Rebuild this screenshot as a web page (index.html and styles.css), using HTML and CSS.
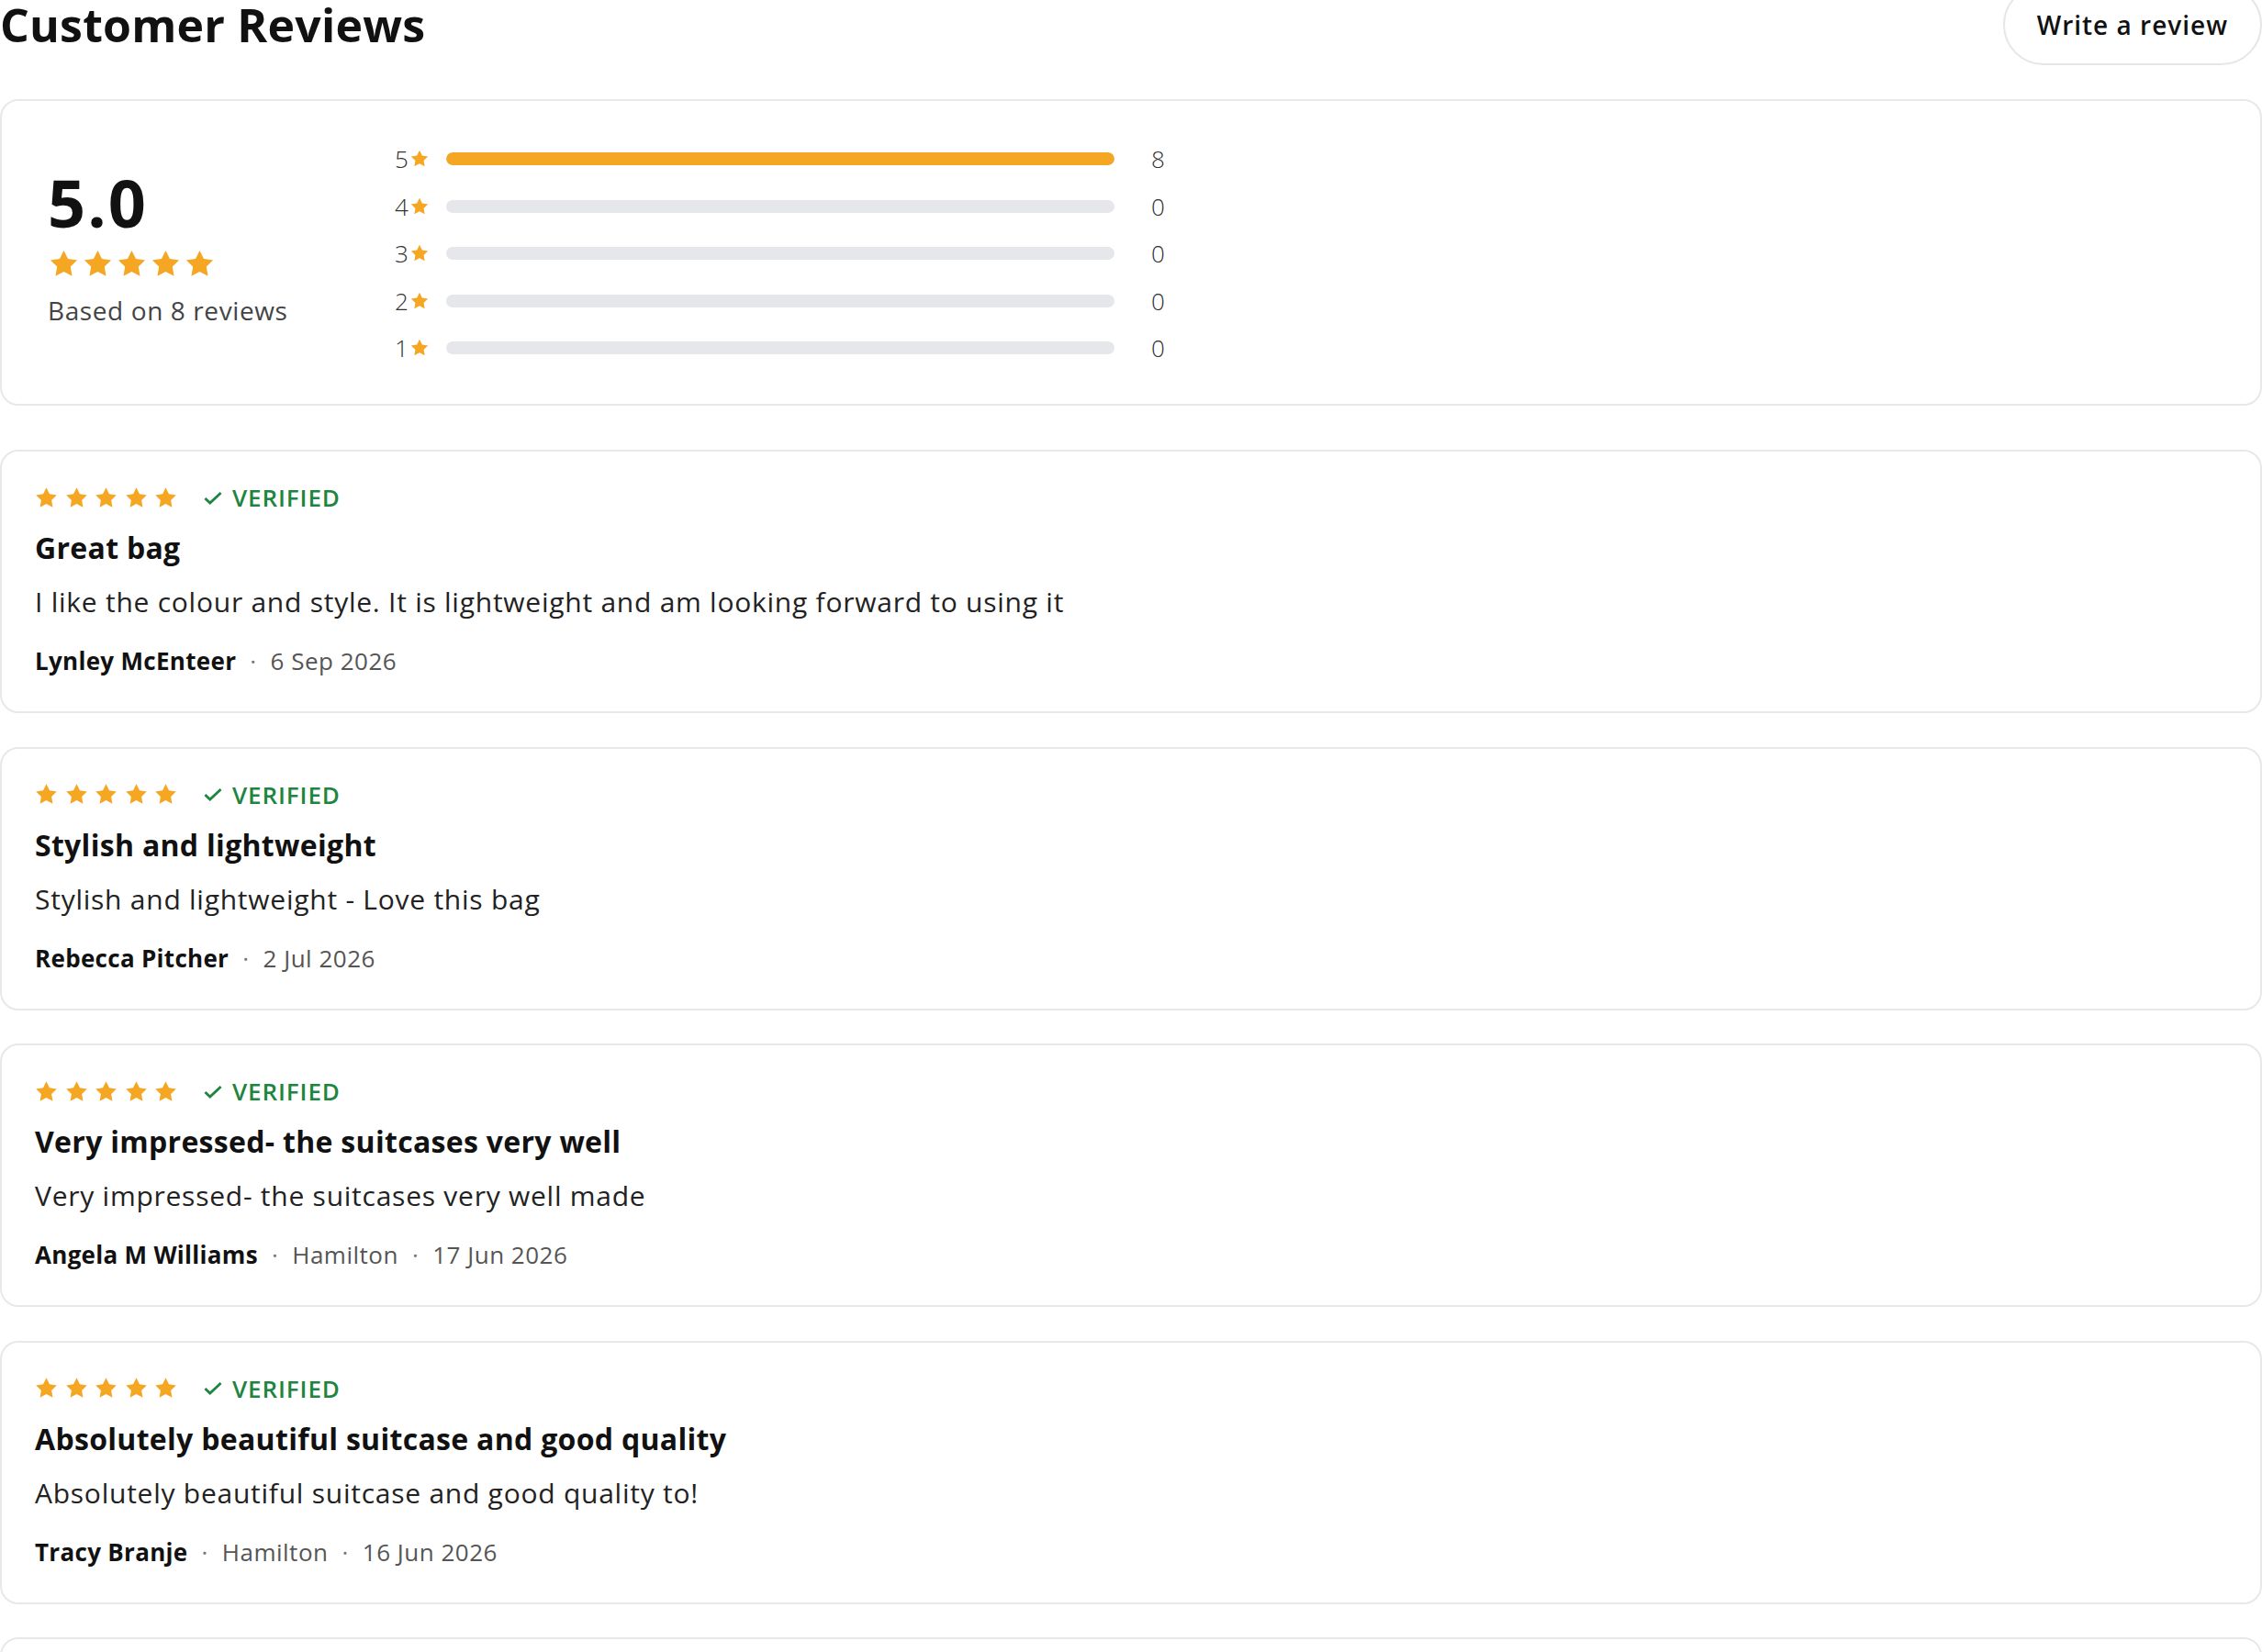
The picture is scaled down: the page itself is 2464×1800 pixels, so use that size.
FILE: index.html
```html
<!DOCTYPE html>
<html lang="en">
  <head>
    <meta charset="UTF-8" />
    <meta name="viewport" content="width=device-width, initial-scale=1.0" />
    <title>Customer Reviews</title>
    <link rel="stylesheet" href="styles.css">
  </head>
  <body>
    <!-- shared icons -->
    <svg class="sprite" aria-hidden="true">
      <symbol id="star" viewBox="0 0 24 24">
        <path d="M12 2l3.09 6.26L22 9.27l-5 4.87 1.18 6.88L12 17.77l-6.18 3.25L7 14.14 2 9.27l6.91-1.01L12 2z" />
      </symbol>
      <symbol id="check" viewBox="0 0 20 14">
        <path d="M2 7.5L7 12.2L18 1.8" fill="none" stroke="currentColor" stroke-width="2.6" />
      </symbol>
    </svg>

    <div class="reviews">
      <div class="reviews-header">
        <h1>Customer Reviews</h1>
        <button type="button" class="write-btn">Write a review</button>
      </div>

      <!-- Rating summary -->
      <div class="summary">
        <div class="summary-score">
          <div class="score-value">5.0</div>
          <div class="score-stars">
            <svg><use href="#star" /></svg>
            <svg><use href="#star" /></svg>
            <svg><use href="#star" /></svg>
            <svg><use href="#star" /></svg>
            <svg><use href="#star" /></svg>
          </div>
          <div class="score-count">Based on 8 reviews</div>
        </div>

        <div class="rating-bars">
          <div class="bar-row">
            <span class="bar-label">5<svg><use href="#star" /></svg></span>
            <div class="bar-track"><div class="bar-fill" style="width: 100%"></div></div>
            <span class="bar-count">8</span>
          </div>
          <div class="bar-row">
            <span class="bar-label">4<svg><use href="#star" /></svg></span>
            <div class="bar-track"><div class="bar-fill" style="width: 0%"></div></div>
            <span class="bar-count">0</span>
          </div>
          <div class="bar-row">
            <span class="bar-label">3<svg><use href="#star" /></svg></span>
            <div class="bar-track"><div class="bar-fill" style="width: 0%"></div></div>
            <span class="bar-count">0</span>
          </div>
          <div class="bar-row">
            <span class="bar-label">2<svg><use href="#star" /></svg></span>
            <div class="bar-track"><div class="bar-fill" style="width: 0%"></div></div>
            <span class="bar-count">0</span>
          </div>
          <div class="bar-row">
            <span class="bar-label">1<svg><use href="#star" /></svg></span>
            <div class="bar-track"><div class="bar-fill" style="width: 0%"></div></div>
            <span class="bar-count">0</span>
          </div>
        </div>
      </div>

      <!-- Review list -->
      <div class="review-list">
        <div class="review">
          <div class="review-top">
            <div class="review-stars">
              <svg><use href="#star" /></svg>
              <svg><use href="#star" /></svg>
              <svg><use href="#star" /></svg>
              <svg><use href="#star" /></svg>
              <svg><use href="#star" /></svg>
            </div>
            <span class="verified"><svg><use href="#check" /></svg>VERIFIED</span>
          </div>
          <h3 class="review-title">Great bag</h3>
          <p class="review-body">I like the colour and style. It is lightweight and am looking forward to using it</p>
          <div class="review-meta">
            <span class="review-author">Lynley McEnteer</span>
            <span class="meta-sep">·</span>
            <span>6 Sep 2026</span>
          </div>
        </div>

        <div class="review">
          <div class="review-top">
            <div class="review-stars">
              <svg><use href="#star" /></svg>
              <svg><use href="#star" /></svg>
              <svg><use href="#star" /></svg>
              <svg><use href="#star" /></svg>
              <svg><use href="#star" /></svg>
            </div>
            <span class="verified"><svg><use href="#check" /></svg>VERIFIED</span>
          </div>
          <h3 class="review-title">Stylish and lightweight</h3>
          <p class="review-body">Stylish and lightweight - Love this bag</p>
          <div class="review-meta">
            <span class="review-author">Rebecca Pitcher</span>
            <span class="meta-sep">·</span>
            <span>2 Jul 2026</span>
          </div>
        </div>

        <div class="review">
          <div class="review-top">
            <div class="review-stars">
              <svg><use href="#star" /></svg>
              <svg><use href="#star" /></svg>
              <svg><use href="#star" /></svg>
              <svg><use href="#star" /></svg>
              <svg><use href="#star" /></svg>
            </div>
            <span class="verified"><svg><use href="#check" /></svg>VERIFIED</span>
          </div>
          <h3 class="review-title">Very impressed- the suitcases very well</h3>
          <p class="review-body">Very impressed- the suitcases very well made</p>
          <div class="review-meta">
            <span class="review-author">Angela M Williams</span>
            <span class="meta-sep">·</span>
            <span>Hamilton</span>
            <span class="meta-sep">·</span>
            <span>17 Jun 2026</span>
          </div>
        </div>

        <div class="review">
          <div class="review-top">
            <div class="review-stars">
              <svg><use href="#star" /></svg>
              <svg><use href="#star" /></svg>
              <svg><use href="#star" /></svg>
              <svg><use href="#star" /></svg>
              <svg><use href="#star" /></svg>
            </div>
            <span class="verified"><svg><use href="#check" /></svg>VERIFIED</span>
          </div>
          <h3 class="review-title">Absolutely beautiful suitcase and good quality</h3>
          <p class="review-body">Absolutely beautiful suitcase and good quality to!</p>
          <div class="review-meta">
            <span class="review-author">Tracy Branje</span>
            <span class="meta-sep">·</span>
            <span>Hamilton</span>
            <span class="meta-sep">·</span>
            <span>16 Jun 2026</span>
          </div>
        </div>

        <!-- next card, below the fold -->
        <div class="review">
          <div class="review-top">
            <div class="review-stars">
              <svg><use href="#star" /></svg>
              <svg><use href="#star" /></svg>
              <svg><use href="#star" /></svg>
              <svg><use href="#star" /></svg>
              <svg><use href="#star" /></svg>
            </div>
          </div>
        </div>
      </div>
    </div>
  </body>
</html>
```

FILE: styles.css
```css
body {
  font-family: "Open Sans", Arial, sans-serif;
  background-color: #fff;
  color: #111;
  margin: 0;
  padding: 0;
}

.sprite {
  width: 0;
  height: 0;
  overflow: hidden;
  display: block;
}

.reviews {
  margin-top: -17px;
}

/* header */
.reviews-header {
  display: flex;
  justify-content: space-between;
  align-items: center;
}

.reviews-header h1 {
  margin: 0;
  font-size: 50px;
  font-weight: 700;
  line-height: 50px;
  letter-spacing: 0.2px;
}

.write-btn {
  height: 88px;
  padding: 0 35px;
  border: 2px solid #e6e6e6;
  border-radius: 999px;
  background-color: #fff;
  color: #111;
  font-family: inherit;
  font-size: 28px;
  font-weight: 600;
  letter-spacing: 1px;
  cursor: pointer;
}

/* summary card */
.summary {
  margin-top: 37px;
  border: 2px solid #e8e8e8;
  border-radius: 20px;
  padding: 45px 48px 43px 50px;
  display: flex;
  align-items: center;
}

.summary-score {
  width: 378px;
  flex-shrink: 0;
  padding-bottom: 12px;
}

.score-value {
  font-size: 72px;
  font-weight: 700;
  line-height: 72px;
  letter-spacing: 2px;
}

.score-stars {
  display: flex;
  gap: 2px;
  margin-top: 14px;
}

.score-stars svg {
  width: 35px;
  height: 35px;
  fill: #f5a623;
}

.score-count {
  margin-top: 15px;
  font-size: 28px;
  line-height: 36px;
  letter-spacing: 0.6px;
  color: #444;
}

.rating-bars {
  display: flex;
  flex-direction: column;
  gap: 15.5px;
}

.bar-row {
  display: flex;
  align-items: center;
  height: 36px;
}

.bar-label {
  width: 40px;
  margin-right: 16px;
  display: flex;
  align-items: center;
  font-size: 26px;
  font-weight: 300;
  color: #333;
}

.bar-label svg {
  width: 22px;
  height: 22px;
  margin-left: 1px;
  fill: #f5a623;
}

.bar-track {
  width: 728px;
  height: 14px;
  border-radius: 7px;
  background-color: #e5e7eb;
  overflow: hidden;
}

.bar-fill {
  height: 100%;
  border-radius: 7px;
  background-color: #f5a623;
}

.bar-count {
  margin-left: 40px;
  font-size: 26px;
  font-weight: 300;
  color: #333;
}

/* review cards */
.review-list {
  margin-top: 48px;
  display: flex;
  flex-direction: column;
  gap: 36.5px;
}

.review {
  border: 2px solid #e8e8e8;
  border-radius: 20px;
  padding: 37px 36px 38px;
}

.review-top {
  display: flex;
  align-items: center;
  height: 26px;
}

.review-stars {
  display: flex;
  gap: 5.5px;
  margin-left: -1px;
}

.review-stars svg {
  width: 27px;
  height: 27px;
  fill: #f5a623;
}

.verified {
  margin-left: 27px;
  display: flex;
  align-items: center;
  gap: 10px;
  color: #1e8540;
  font-size: 26px;
  font-weight: 600;
  letter-spacing: 0.9px;
}

.verified svg {
  width: 22px;
  height: 15px;
}

.review-title {
  margin: 22px 0 0;
  font-size: 32px;
  font-weight: 700;
  line-height: 40px;
  letter-spacing: 0.3px;
}

.review-body {
  margin: 18px 0 0;
  font-size: 30px;
  line-height: 42px;
  letter-spacing: 0.75px;
  color: #222;
}

.review-meta {
  margin-top: 26px;
  display: flex;
  align-items: center;
  font-size: 26px;
  line-height: 34px;
  letter-spacing: 0.5px;
  color: #555;
}

.review-author {
  font-weight: 700;
  color: #111;
  letter-spacing: 0.3px;
}

.meta-sep {
  margin: 0 15px;
  color: #777;
}
```
